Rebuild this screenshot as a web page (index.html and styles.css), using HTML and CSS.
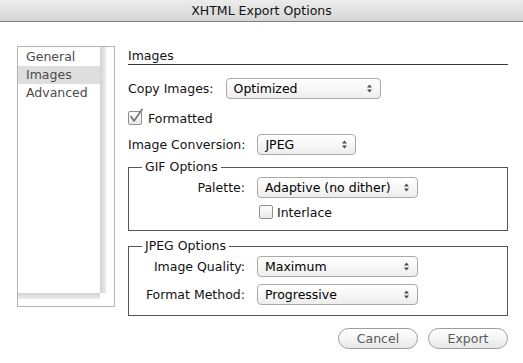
FILE: index.html
```html
<!DOCTYPE html>
<html>
<head>
<meta charset="utf-8">
<title>XHTML Export Options</title>
<link rel="stylesheet" href="styles.css">
</head>
<body>
<div class="window">
  <div class="titlebar">XHTML Export Options</div>
  <div class="content">
    <div class="sidebar">
      <div class="list">
        <div class="item">General</div>
        <div class="item selected">Images</div>
        <div class="item">Advanced</div>
      </div>
    </div>
    <div class="main">
      <div class="heading">Images</div>
      <div class="row row-copy">
        <span class="label">Copy Images:</span>
        <div class="popup popup-copy"><span class="value">Optimized</span><svg class="arrows" viewBox="0 0 7 11"><path d="M3.5 1.5L6 4.5H1Z M1 6.5H6L3.5 9.5Z"/></svg></div>
      </div>
      <div class="row row-check">
        <span class="checkbox checked"><svg class="tick" viewBox="0 0 16 16"><path d="M3 8.5L6 13L14 1.5"/></svg></span>
        <span class="label">Formatted</span>
      </div>
      <div class="row row-conv">
        <span class="label">Image Conversion:</span>
        <div class="popup popup-conv"><span class="value">JPEG</span><svg class="arrows" viewBox="0 0 7 11"><path d="M3.5 1.5L6 4.5H1Z M1 6.5H6L3.5 9.5Z"/></svg></div>
      </div>
      <fieldset class="group group-gif">
        <legend>GIF Options</legend>
        <div class="grid">
          <span class="glabel">Palette:</span>
          <div class="popup"><span class="value">Adaptive (no dither)</span><svg class="arrows" viewBox="0 0 7 11"><path d="M3.5 1.5L6 4.5H1Z M1 6.5H6L3.5 9.5Z"/></svg></div>
          <div class="check-row">
            <span class="checkbox"></span>
            <span class="label">Interlace</span>
          </div>
        </div>
      </fieldset>
      <fieldset class="group group-jpeg">
        <legend>JPEG Options</legend>
        <div class="grid">
          <span class="glabel">Image Quality:</span>
          <div class="popup"><span class="value">Maximum</span><svg class="arrows" viewBox="0 0 7 11"><path d="M3.5 1.5L6 4.5H1Z M1 6.5H6L3.5 9.5Z"/></svg></div>
          <span class="glabel">Format Method:</span>
          <div class="popup"><span class="value">Progressive</span><svg class="arrows" viewBox="0 0 7 11"><path d="M3.5 1.5L6 4.5H1Z M1 6.5H6L3.5 9.5Z"/></svg></div>
        </div>
      </fieldset>
      <div class="buttons">
        <button class="btn">Cancel</button>
        <button class="btn">Export</button>
      </div>
    </div>
  </div>
</div>
</body>
</html>
```
FILE: styles.css
```css
* { box-sizing: border-box; }
html, body { margin: 0; padding: 0; background: #fff; }
body {
  font-family: "DejaVu Sans", "Liberation Sans", sans-serif;
  font-size: 12.5px;
  color: #111;
  width: 523px;
  height: 363px;
  overflow: hidden;
}
.window { width: 523px; height: 363px; background: #fff; }
.titlebar {
  height: 22px;
  line-height: 21px;
  text-align: center;
  background: linear-gradient(#ececec, #d6d6d6);
  border-bottom: 1px solid #7f7f7f;
  color: #111;
}
.content {
  display: flex;
  align-items: flex-start;
  padding: 24px 15px 0 17px;
  gap: 13px;
}
.sidebar {
  width: 98px;
  height: 261px;
  border: 1px solid #b4b4b4;
  flex: none;
}
.list {
  width: 88px;
  height: 252px;
  padding: 1px 6px 6px 0;
  background:
    linear-gradient(to right, #d2d2d2, #ececec) right top / 6px calc(100% - 6px) no-repeat,
    linear-gradient(to bottom, #d2d2d2, #ececec) left bottom / calc(100% - 6px) 6px no-repeat,
    #fff;
}
.item {
  height: 18px;
  line-height: 18px;
  padding-left: 8px;
  color: #4a4a4a;
}
.item.selected { background: #dedede; }

.main { width: 380px; flex: none; }
.heading {
  margin-top: 2px;
  line-height: 16px;
  border-bottom: 1px solid #3a3a3a;
}
.row { display: flex; align-items: center; gap: 12px; }
.row-copy { margin-top: 13px; height: 21px; }
.row-check { margin-top: 9px; height: 20px; gap: 6px; }
.row-conv { margin-top: 6px; height: 21px; }

.popup {
  height: 21px;
  border: 1px solid #a9a9a9;
  border-radius: 4px;
  background: linear-gradient(#ffffff, #f6f6f6 55%, #ededed);
  display: flex;
  align-items: center;
  justify-content: space-between;
  padding: 0 7px 0 7px;
  color: #000;
}
.popup .value { line-height: 19px; }
.popup-copy { width: 155px; }
.popup-conv { width: 99px; }
.arrows { width: 7px; height: 11px; flex: none; fill: #4a4a4a; }

.checkbox {
  position: relative;
  width: 14px;
  height: 14px;
  border: 1px solid #909090;
  border-radius: 2px;
  background: linear-gradient(#fdfdfd, #e9e9e9);
  flex: none;
}
.tick {
  position: absolute;
  left: -1px;
  top: -4px;
  width: 16px;
  height: 16px;
  fill: none;
  stroke: #7a7a7a;
  stroke-width: 1.8;
  stroke-linecap: round;
  stroke-linejoin: round;
}

.group {
  margin: 0;
  padding: 0 0 8px 0;
  border: 1px solid #555;
  min-width: 0;
}
.group legend {
  margin-left: 13px;
  padding: 0 3px;
  line-height: 16px;
}
.group-gif { margin-top: 4px; }
.group-jpeg { margin-top: 7px; padding-bottom: 10px; }
.grid {
  display: grid;
  grid-template-columns: 116px 161px;
  column-gap: 12px;
  align-items: center;
  margin-top: 2px;
}
.glabel { text-align: right; }
.group-gif .check-row {
  grid-column: 2;
  display: flex;
  align-items: center;
  gap: 4px;
  height: 20px;
  margin-top: 4px;
  padding-left: 2px;
}
.group-jpeg .grid { row-gap: 7px; }

.buttons {
  display: flex;
  justify-content: flex-end;
  gap: 10px;
  margin-top: 12px;
}
.btn {
  width: 80px;
  height: 21px;
  border: 1px solid #9c9c9c;
  border-radius: 11px;
  background: linear-gradient(#ffffff, #f2f2f2 60%, #e8e8e8);
  font-family: "DejaVu Sans", "Liberation Sans", sans-serif;
  font-size: 12.5px;
  color: #5a5a5a;
  padding: 0;
  line-height: 19px;
}
```
